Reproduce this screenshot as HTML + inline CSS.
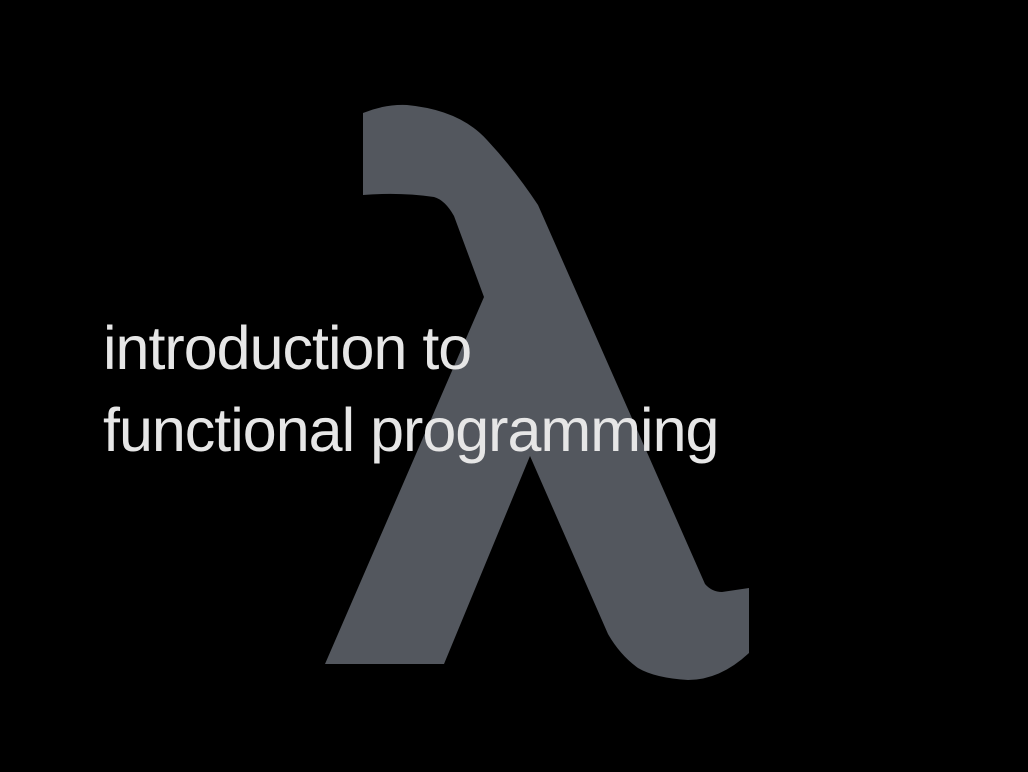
<!DOCTYPE html>
<html><head><style>
html,body{margin:0;padding:0;background:#000;width:1028px;height:772px;overflow:hidden}
.t{position:absolute;left:103px;font-family:"Liberation Sans",sans-serif;font-size:61px;letter-spacing:-1px;color:#e6e6e6;white-space:nowrap;line-height:1}
</style></head><body>
<svg width="1028" height="772" style="position:absolute;left:0;top:0">
<path fill="#53575e" d="M363,113 Q385,104 407,105 Q460,110 487,140 Q515,170 538,205 L705,584 Q712,592 722,592 L749,588 L749,653 Q720,680 688,680 Q655,678 638,668 Q620,655 608,634 L530,456 L444,664 L325,664 L484,297 L454,216 Q445,200 434,197 Q400,192 363,195 Z"/>
</svg>
<div class="t" style="top:318px">introduction to</div>
<div class="t" style="top:400px">functional programming</div>
</body></html>
